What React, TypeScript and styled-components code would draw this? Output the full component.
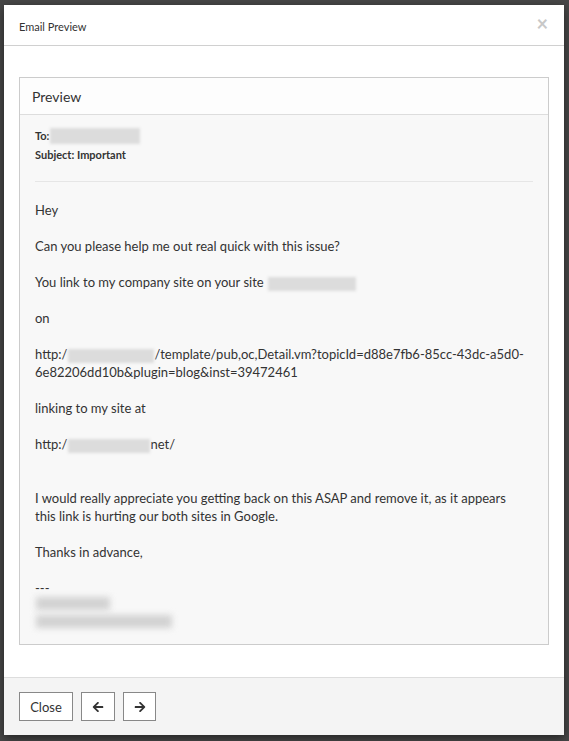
import React from 'react'
import styled, { createGlobalStyle } from 'styled-components'
import { FaArrowLeft, FaArrowRight } from 'react-icons/fa'

const GlobalStyle = createGlobalStyle`
  html, body {
    margin: 0;
    padding: 0;
    background: #474747;
    font-family: Lato, "Open Sans", Arial, sans-serif;
    color: #333;
  }
`

const Backdrop = styled.div`
  width: 569px;
  height: 741px;
  padding: 5px 5px 6px 4px;
  box-sizing: border-box;
  background: #474747;
`

const Modal = styled.div`
  width: 560px;
  height: 730px;
  background: #fff;
  display: flex;
  flex-direction: column;
  box-shadow: 0 3px 9px rgba(0, 0, 0, 0.5);
`

const Header = styled.div`
  height: 41px;
  box-sizing: border-box;
  border-bottom: 1px solid #d0d0d0;
  display: flex;
  align-items: center;
  justify-content: space-between;
  padding: 0 16px 0 15px;
`

const HeaderTitle = styled.span`
  font-size: 11px;
  color: #333;
  margin-top: 2px;
`

const CloseX = styled.span`
  font-size: 20px;
  font-weight: bold;
  color: #c8c8c8;
  margin-top: -4px;
  line-height: 1;
`

const Body = styled.div`
  flex: 1;
  padding: 31px 15px 32px;
  display: flex;
  flex-direction: column;
`

const Panel = styled.div`
  flex: 1;
  border: 1px solid #ccc;
  display: flex;
  flex-direction: column;
  background: #f8f8f8;
`

const PanelHeader = styled.div`
  height: 37px;
  box-sizing: border-box;
  border-bottom: 1px solid #ddd;
  background: #fdfdfd;
  display: flex;
  align-items: center;
  padding: 1px 12px 0;
  font-size: 14px;
  color: #333;
`

const PanelBody = styled.div`
  padding: 11px 21px 0 15px;
  font-size: 13px;
  line-height: 18px;
  color: #333;
`

const Meta = styled.div`
  font-size: 11px;
  font-weight: bold;
  line-height: 19px;
  display: flex;
  align-items: center;
`

const Divider = styled.hr`
  border: none;
  border-top: 1px solid #e6e6e6;
  margin: 17px -6px 19px 0;
`

const Para = styled.p`
  margin: 0 0 18px;
`

const Spacer = styled.div`
  height: 18px;
`

const Blur = styled.span<{ w: number; h?: number; soft?: boolean }>`
  display: inline-block;
  width: ${({ w }) => w}px;
  height: ${({ h }) => h ?? 14}px;
  margin-left: 1px;
  background: ${({ soft }) => (soft ? '#d2d2d2' : '#dcdcdc')};
  filter: blur(${({ soft }) => (soft ? 3 : 1.5)}px);
  vertical-align: middle;
`

const Signature = styled.div`
  display: flex;
  flex-direction: column;
  gap: 5px;
  margin-top: 0;
`

const Footer = styled.div`
  height: 58px;
  box-sizing: border-box;
  border-top: 1px solid #ddd;
  background: #f4f4f4;
  display: flex;
  align-items: center;
  gap: 8px;
  padding: 0 15px;
`

const Button = styled.button<{ w: number }>`
  width: ${({ w }) => w}px;
  height: 29px;
  border: 1px solid #888;
  background: #fff;
  font-family: Lato, "Open Sans", Arial, sans-serif;
  font-size: 13px;
  color: #333;
  display: flex;
  align-items: center;
  justify-content: center;
  padding: 0;
`

const App = (): JSX.Element => {
  return (
    <Backdrop>
      <GlobalStyle />
      <Modal>
        <Header>
          <HeaderTitle>Email Preview</HeaderTitle>
          <CloseX>×</CloseX>
        </Header>
        <Body>
          <Panel>
            <PanelHeader>Preview</PanelHeader>
            <PanelBody>
              <Meta>To:<Blur w={90} h={16} /></Meta>
              <Meta>Subject: Important</Meta>
              <Divider />
              <Para>Hey</Para>
              <Para>Can you please help me out real quick with this issue?</Para>
              <Para>You link to my company site on your site <Blur w={88} /></Para>
              <Para>on</Para>
              <Para>http:/<Blur w={86} />/template/pub,oc,Detail.vm?topicId=d88e7fb6-85cc-43dc-a5d0-6e82206dd10b&amp;plugin=blog&amp;inst=39472461</Para>
              <Para>linking to my site at</Para>
              <Para>http:/<Blur w={82} />net/</Para>
              <Spacer />
              <Para>I would really appreciate you getting back on this ASAP and remove it, as it appears this link is hurting our both sites in Google.</Para>
              <Para>Thanks in advance,</Para>
              <div>---</div>
              <Signature>
                <Blur w={74} h={13} soft />
                <Blur w={136} h={13} soft />
              </Signature>
            </PanelBody>
          </Panel>
        </Body>
        <Footer>
          <Button w={54}>Close</Button>
          <Button w={34}><FaArrowLeft size={12} /></Button>
          <Button w={33}><FaArrowRight size={12} /></Button>
        </Footer>
      </Modal>
    </Backdrop>
  )
}

export default App
